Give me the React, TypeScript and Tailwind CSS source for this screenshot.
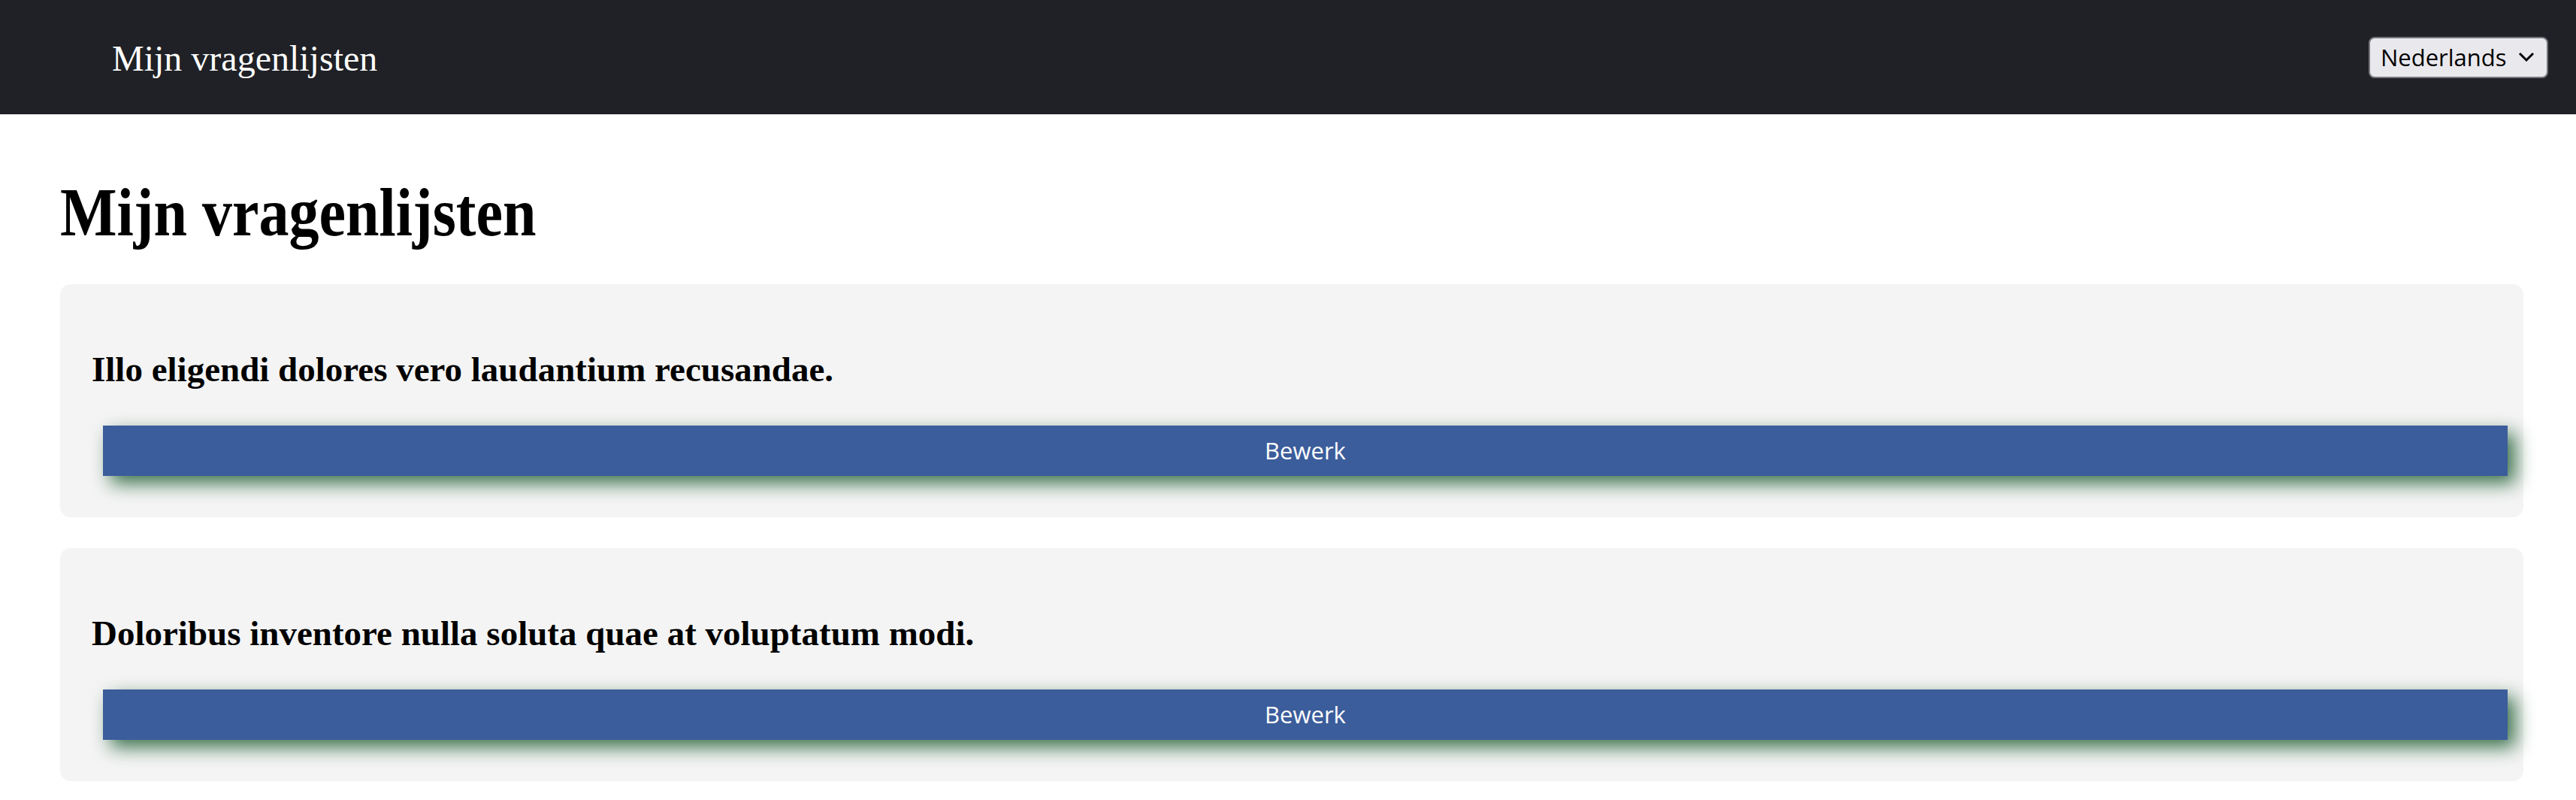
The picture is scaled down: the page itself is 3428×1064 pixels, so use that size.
import React from 'react';

const lists = [
  { id: 1, title: 'Illo eligendi dolores vero laudantium recusandae.' },
  { id: 2, title: 'Doloribus inventore nulla soluta quae at voluptatum modi.' },
];

function LanguageSelect() {
  return (
    <div className="flex h-[55px] w-[239px] items-center justify-between rounded-[8px] border-2 border-[#76757d] bg-[#e9e8ed] pl-[14px] pr-[16px] font-['Open_Sans',sans-serif] text-[31px] text-black">
      <span className="leading-none">Nederlands</span>
      <svg width="22" height="14" viewBox="0 0 22 14" fill="none">
        <path d="M2 2l9 9 9-9" stroke="black" strokeWidth="3" />
      </svg>
    </div>
  );
}

function ListCard({ title }: { title: string }) {
  return (
    <div className="flex flex-col rounded-[14px] bg-[#f4f4f4] pb-[55px] pl-[42px] pr-[21px] pt-[90px]">
      <h2 className="font-['Liberation_Serif',serif] text-[47px] font-bold leading-none text-black">{title}</h2>
      <button className="ml-[15px] mt-[51px] h-[67px] bg-[#3b5d9b] font-['Open_Sans',sans-serif] text-[31px] text-white shadow-[10px_10px_24px_rgba(40,100,60,0.9)]">
        Bewerk
      </button>
    </div>
  );
}

export default function App() {
  return (
    <div className="min-h-screen bg-white">
      <header className="flex h-[152px] items-center justify-between bg-[#1f2126] pl-[149px] pr-[37px]">
        <span className="mt-[4px] font-['Liberation_Serif',serif] text-[48px] leading-none text-white">Mijn vragenlijsten</span>
        <LanguageSelect />
      </header>

      <main className="pl-[80px] pr-[70px]">
        <h1 className="mt-[84px] origin-left scale-x-[0.87] font-['Liberation_Serif',serif] text-[92px] font-bold leading-none text-black">
          Mijn vragenlijsten
        </h1>
        <div className="mt-[50px] flex flex-col gap-[41px]">
          {lists.map((l) => (
            <ListCard key={l.id} title={l.title} />
          ))}
        </div>
      </main>
    </div>
  );
}
